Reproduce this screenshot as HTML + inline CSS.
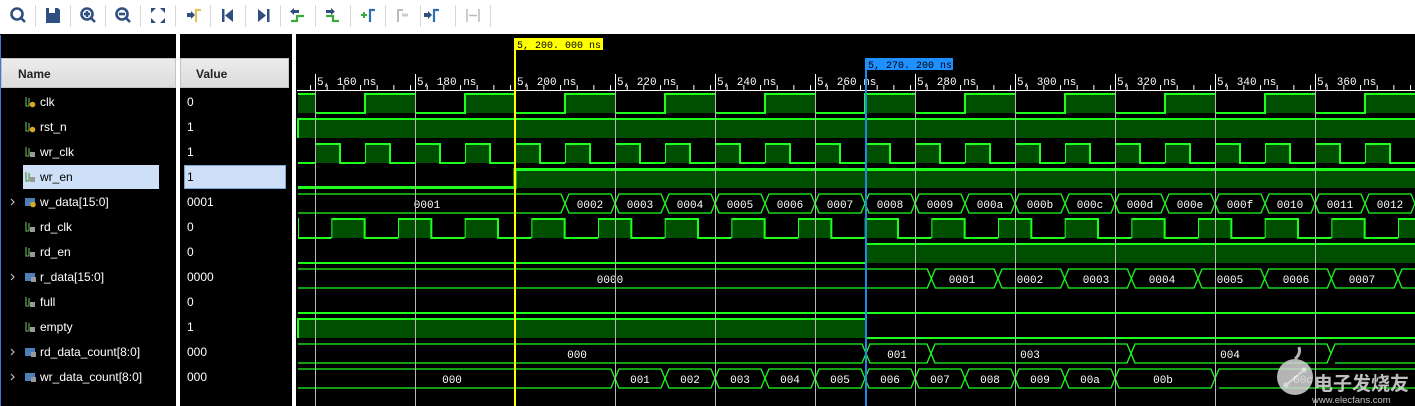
<!DOCTYPE html>
<html><head><meta charset="utf-8"><style>
body{margin:0;width:1415px;height:406px;overflow:hidden;background:#000;position:relative;font-family:"Liberation Sans",sans-serif}
#tb{position:absolute;left:0;top:0;width:1415px;height:34px;background:#fff}
.sep{position:absolute;top:5px;width:1px;height:22px;background:#d8d8d8}
.hdr{position:absolute;top:58px;height:30px;background:linear-gradient(#ececec,#dcdcdc);border:1px solid #c4c4c4;box-sizing:border-box;font-weight:bold;font-size:12px;color:#222;line-height:30px}
.nm{position:absolute;left:40px;color:#fff;font-size:12px;line-height:14px}
.vl{position:absolute;left:187px;color:#fff;font-size:12px;line-height:14px}
</style></head><body>
<div id="tb">
<svg width="500" height="34" style="position:absolute;left:0;top:0">
<g fill="none" stroke="#2f4f80" stroke-width="2.6">
<circle cx="17" cy="14" r="5.5"/><line x1="21" y1="18" x2="25" y2="22"/>
<circle cx="87" cy="14" r="5.5"/><line x1="91" y1="18" x2="95" y2="22"/><line x1="84" y1="14" x2="90" y2="14"/><line x1="87" y1="11" x2="87" y2="17"/>
<circle cx="122" cy="14" r="5.5"/><line x1="126" y1="18" x2="130" y2="22"/><line x1="119" y1="14" x2="125" y2="14"/>
</g>
<g fill="#2f4f80">
<path d="M46 8h12l2 2v13h-14z"/><rect x="49" y="8" width="6" height="5" fill="#fff"/>
<path d="M151 8h5l-5 5zM165 8h-5l5 5zM151 23h5l-5-5zM165 23h-5l5-5z"/>
<rect x="222" y="9" width="2.5" height="13"/><path d="M233 9v13l-8-6.5z"/>
<path d="M258 9v13l8-6.5z"/><rect x="267" y="9" width="2.5" height="13"/>
<path d="M187 13h4v-2l4 4-4 4v-2h-4z"/>
<path d="M292 10h2v-2l-4 3.5 4 3.5v-2h5v-3z"/>
<path d="M326 10h5v-2l4 3.5-4 3.5v-2h-5z"/>
<path d="M424 13h4v-2l4 4-4 4v-2h-4z"/>
</g>
<path d="M196 22v-12h5" fill="none" stroke="#e2c25a" stroke-width="2.2"/>
<path d="M291 21h6v-5h7" fill="none" stroke="#3aaa3a" stroke-width="2.2"/>
<path d="M326 16h7v5h6" fill="none" stroke="#3aaa3a" stroke-width="2.2"/>
<path d="M361 15h6M364 12v6" stroke="#3aaa3a" stroke-width="2"/>
<path d="M370 22v-12h5" fill="none" stroke="#2f6fb0" stroke-width="2.2"/>
<path d="M398 22v-12h5" fill="none" stroke="#bbb" stroke-width="2"/><path d="M402 15h6" stroke="#ccc" stroke-width="3"/>
<path d="M434 22v-12h5" fill="none" stroke="#2f6fb0" stroke-width="2.2"/>
<path d="M467 9v13M479 9v13M469 15.5h8" stroke="#bbb" stroke-width="1.5" fill="none"/>
</svg>
<div class="sep" style="left:35px"></div><div class="sep" style="left:70px"></div><div class="sep" style="left:105px"></div><div class="sep" style="left:140px"></div><div class="sep" style="left:175px"></div><div class="sep" style="left:210px"></div><div class="sep" style="left:245px"></div><div class="sep" style="left:280px"></div><div class="sep" style="left:315px"></div><div class="sep" style="left:350px"></div><div class="sep" style="left:385px"></div><div class="sep" style="left:420px"></div><div class="sep" style="left:455px"></div><div class="sep" style="left:490px"></div>
</div>
<div style="position:absolute;left:0;top:35px;width:1px;height:371px;background:#3c78d8"></div>
<div style="position:absolute;left:176px;top:34px;width:4px;height:372px;background:#fff"></div>
<div style="position:absolute;left:292px;top:34px;width:4px;height:372px;background:#fff"></div>
<div class="hdr" style="left:1px;width:175px;padding-left:16px">Name</div>
<div class="hdr" style="left:180px;width:109px;padding-left:15px">Value</div>
<div style="position:absolute;left:23px;top:165px;width:136px;height:24px;background:#cde0f7"></div>
<div style="position:absolute;left:184px;top:165px;width:102px;height:24px;background:#cde0f7;border:1px solid #7aa7d8;box-sizing:border-box"></div>
<svg width="40" height="406" style="position:absolute;left:0;top:0">
<defs>
<g id="sc"><path d="M1 0v9h3M4 1v8" stroke="#5a9a4a" stroke-width="1.3" fill="none"/><rect x="5" y="5" width="5" height="5" fill="#999"/></g>
<g id="sy"><path d="M1 0v9h3M4 1v8" stroke="#5a9a4a" stroke-width="1.3" fill="none"/><circle cx="7.5" cy="7.5" r="2.8" fill="#d8a820"/></g>
<g id="bs"><rect x="0" y="1" width="10" height="8" fill="#4a7fb8"/><rect x="6" y="5" width="5" height="5" fill="#999"/></g>
<g id="by"><rect x="0" y="1" width="10" height="8" fill="#4a7fb8"/><circle cx="8" cy="7.5" r="2.8" fill="#d8a820"/></g>
</defs>
<use href="#sy" x="25" y="97"/><use href="#sy" x="25" y="122"/><use href="#sc" x="25" y="147"/><use href="#sc" x="25" y="172"/>
<use href="#by" x="25" y="197"/><use href="#sc" x="25" y="222"/><use href="#sc" x="25" y="247"/><use href="#bs" x="25" y="272"/>
<use href="#sc" x="25" y="297"/><use href="#sc" x="25" y="322"/><use href="#bs" x="25" y="347"/><use href="#bs" x="25" y="372"/>
<g stroke="#bbb" fill="none" stroke-width="1.2"><path d="M11 199l3 3-3 3M11 274l3 3-3 3M11 349l3 3-3 3M11 374l3 3-3 3"/></g>
</svg>
<div class="nm" style="top:95px">clk</div><div class="vl" style="top:95px">0</div>
<div class="nm" style="top:120px">rst_n</div><div class="vl" style="top:120px">1</div>
<div class="nm" style="top:145px">wr_clk</div><div class="vl" style="top:145px">1</div>
<div class="nm" style="top:170px;color:#000">wr_en</div><div class="vl" style="top:170px;color:#000">1</div>
<div class="nm" style="top:195px">w_data[15:0]</div><div class="vl" style="top:195px">0001</div>
<div class="nm" style="top:220px">rd_clk</div><div class="vl" style="top:220px">0</div>
<div class="nm" style="top:245px">rd_en</div><div class="vl" style="top:245px">0</div>
<div class="nm" style="top:270px">r_data[15:0]</div><div class="vl" style="top:270px">0000</div>
<div class="nm" style="top:295px">full</div><div class="vl" style="top:295px">0</div>
<div class="nm" style="top:320px">empty</div><div class="vl" style="top:320px">1</div>
<div class="nm" style="top:345px">rd_data_count[8:0]</div><div class="vl" style="top:345px">000</div>
<div class="nm" style="top:370px">wr_data_count[8:0]</div><div class="vl" style="top:370px">000</div>

<svg width="1415" height="406" style="position:absolute;left:0;top:0">
<defs>
<clipPath id="wc"><rect x="297" y="35" width="1118" height="371"/></clipPath>
<pattern id="pclk" patternUnits="userSpaceOnUse" x="315" y="0" width="100" height="406">
<rect x="50" y="94" width="50" height="19" fill="#004f00"/><path d="M0,94V113H50V94H100" stroke="#1eff1e" fill="none" stroke-width="2"/></pattern>
<pattern id="pwc" patternUnits="userSpaceOnUse" x="315" y="0" width="50" height="406">
<rect x="0" y="144" width="25" height="19" fill="#004f00"/><path d="M0,163V144H25V163H50" stroke="#1eff1e" fill="none" stroke-width="2"/></pattern>
<pattern id="prc" patternUnits="userSpaceOnUse" x="331.33" y="0" width="66.667" height="406">
<rect x="0" y="219" width="33.33" height="19" fill="#004f00"/><path d="M0,238V219H33.33V238H66.67" stroke="#1eff1e" fill="none" stroke-width="2"/></pattern>
<pattern id="pwd" patternUnits="userSpaceOnUse" x="565" y="0" width="50" height="406">
<path d="M0,203.5L4,194H46L50,203.5L46,213H4Z" stroke="#1eff1e" fill="none" stroke-width="1.3"/></pattern>
<pattern id="prd" patternUnits="userSpaceOnUse" x="931.33" y="0" width="66.667" height="406">
<path d="M0,278.5L4,269H62.67L66.67,278.5L62.67,288H4Z" stroke="#1eff1e" fill="none" stroke-width="1.3"/></pattern>
<pattern id="pwdc" patternUnits="userSpaceOnUse" x="615" y="0" width="50" height="406">
<path d="M0,378.5L4,369H46L50,378.5L46,388H4Z" stroke="#1eff1e" fill="none" stroke-width="1.3"/></pattern>
<pattern id="ptk" patternUnits="userSpaceOnUse" x="310" y="0" width="16.667" height="406">
<line x1="0.5" y1="85" x2="0.5" y2="90" stroke="#fff"/></pattern>
</defs>
<g clip-path="url(#wc)">
<rect x="297" y="84" width="1118" height="6" fill="url(#ptk)"/>
<line x1="297" y1="90.5" x2="1415" y2="90.5" stroke="#fff"/>
<g stroke="#fff"><path d="M315.5,74V90M415.5,74V90M515.5,74V90M615.5,74V90M715.5,74V90M815.5,74V90M915.5,74V90M1015.5,74V90M1115.5,74V90M1215.5,74V90M1315.5,74V90"/></g>
<g fill="#fff" font-family="Liberation Mono,monospace" font-size="11">
<text x="317" y="85">5, 160 ns</text><text x="417" y="85">5, 180 ns</text><text x="517" y="85">5, 200 ns</text><text x="617" y="85">5, 220 ns</text><text x="717" y="85">5, 240 ns</text><text x="817" y="85">5, 260 ns</text><text x="917" y="85">5, 280 ns</text><text x="1017" y="85">5, 300 ns</text><text x="1117" y="85">5, 320 ns</text><text x="1217" y="85">5, 340 ns</text><text x="1317" y="85">5, 360 ns</text>
</g>
<rect x="298" y="90" width="1117" height="25" fill="url(#pclk)"/>
<rect x="298" y="140" width="1117" height="25" fill="url(#pwc)"/>
<rect x="298" y="215" width="1117" height="25" fill="url(#prc)"/>
<rect x="298" y="119" width="1117" height="19" fill="#004f00"/>
<path d="M298,138V119H1415" stroke="#1eff1e" stroke-width="2" fill="none"/>
<rect x="515" y="169" width="900" height="19" fill="#004f00"/>
<path d="M298,187.5H515V169.5H1415" stroke="#1eff1e" stroke-width="3" fill="none"/>
<path d="M298,194H561L565,203.5L561,213H298" stroke="#1eff1e" fill="none" stroke-width="1.3"/>
<rect x="565" y="190" width="850" height="26" fill="url(#pwd)"/>
<rect x="866" y="244" width="549" height="19" fill="#004f00"/>
<path d="M298,263H866V244H1415" stroke="#1eff1e" stroke-width="2" fill="none"/>
<path d="M298,269H927.3L931.3,278.5L927.3,288H298" stroke="#1eff1e" fill="none" stroke-width="1.3"/>
<rect x="931" y="265" width="484" height="26" fill="url(#prd)"/>
<path d="M298,313H1415" stroke="#1eff1e" stroke-width="2"/>
<rect x="298" y="319" width="568" height="19" fill="#004f00"/>
<path d="M298,338V319H866V338H1415" stroke="#1eff1e" stroke-width="2" fill="none"/>
<g stroke="#1eff1e" fill="none" stroke-width="1.3">
<path d="M298,344H862L866,353.5L862,363H298"/>
<path d="M866,353.5L870,344H927L931,353.5L927,363H870Z"/>
<path d="M931,353.5L935,344H1127L1131,353.5L1127,363H935Z"/>
<path d="M1131,353.5L1135,344H1327L1331,353.5L1327,363H1135Z"/>
<path d="M1331,353.5L1335,344H1420M1420,363H1335Z"/>
<path d="M298,369H611L615,378.5L611,388H298"/>
<path d="M1115,378.5L1119,369H1211L1215,378.5L1211,388H1119Z"/>
<path d="M1215,378.5L1219,369H1420M1420,388H1219Z"/>
</g>
<rect x="615" y="365" width="500" height="26" fill="url(#pwdc)"/>
<g fill="#fff" font-family="Liberation Mono,monospace" font-size="11" text-anchor="middle">
<text x="427" y="208">0001</text><text x="590" y="208">0002</text><text x="640" y="208">0003</text><text x="690" y="208">0004</text><text x="740" y="208">0005</text><text x="790" y="208">0006</text><text x="840" y="208">0007</text><text x="890" y="208">0008</text><text x="940" y="208">0009</text><text x="990" y="208">000a</text><text x="1040" y="208">000b</text><text x="1090" y="208">000c</text><text x="1140" y="208">000d</text><text x="1190" y="208">000e</text><text x="1240" y="208">000f</text><text x="1290" y="208">0010</text><text x="1340" y="208">0011</text><text x="1390" y="208">0012</text>
<text x="610" y="283">0000</text><text x="962" y="283">0001</text><text x="1030" y="283">0002</text><text x="1096" y="283">0003</text><text x="1162" y="283">0004</text><text x="1230" y="283">0005</text><text x="1296" y="283">0006</text><text x="1362" y="283">0007</text>
<text x="577" y="358">000</text><text x="897" y="358">001</text><text x="1030" y="358">003</text><text x="1230" y="358">004</text>
<text x="452" y="383">000</text><text x="640" y="383">001</text><text x="690" y="383">002</text><text x="740" y="383">003</text><text x="790" y="383">004</text><text x="840" y="383">005</text><text x="890" y="383">006</text><text x="940" y="383">007</text><text x="990" y="383">008</text><text x="1040" y="383">009</text><text x="1090" y="383">00a</text><text x="1163" y="383">00b</text><text x="1303" y="383">00c</text>
</g>
<g stroke="#b8b8b8" stroke-width="1"><path d="M315.5,91V406M415.5,91V406M615.5,91V406M715.5,91V406M815.5,91V406M915.5,91V406M1015.5,91V406M1115.5,91V406M1215.5,91V406M1315.5,91V406"/></g>
<line x1="515" y1="38" x2="515" y2="406" stroke="#ffff00" stroke-width="2"/>
<rect x="514" y="38" width="89" height="12" fill="#ffff00"/>
<text x="517" y="48" font-family="Liberation Mono,monospace" font-size="10" fill="#000">5, 200. 000 ns</text>
<line x1="866" y1="58" x2="866" y2="406" stroke="#1e88e5" stroke-width="2"/>
<rect x="865" y="58" width="88" height="12" fill="#1e90ff"/>
<text x="868" y="68" font-family="Liberation Mono,monospace" font-size="10" fill="#000">5, 270. 200 ns</text>
</g>
<g opacity="0.85">
<circle cx="1295" cy="377" r="18" fill="#d4d4d4"/>
<path d="M1286,385L1304,370" stroke="#fff" stroke-width="2"/><circle cx="1286" cy="385" r="2.5" fill="#fff"/><circle cx="1304" cy="370" r="2.5" fill="#fff"/>
<path d="M1295,359Q1301,354 1299,347" stroke="#d4d4d4" stroke-width="3" fill="none"/>
<text x="1314" y="390" font-family="Noto Sans CJK SC,sans-serif" font-size="19" font-weight="bold" fill="#e0e0e0">电子发烧友</text>
<text x="1312" y="403" font-family="Liberation Sans,sans-serif" font-size="9.5" fill="#e0e0e0">www.elecfans.com</text>
</g>
</svg>
</body></html>
